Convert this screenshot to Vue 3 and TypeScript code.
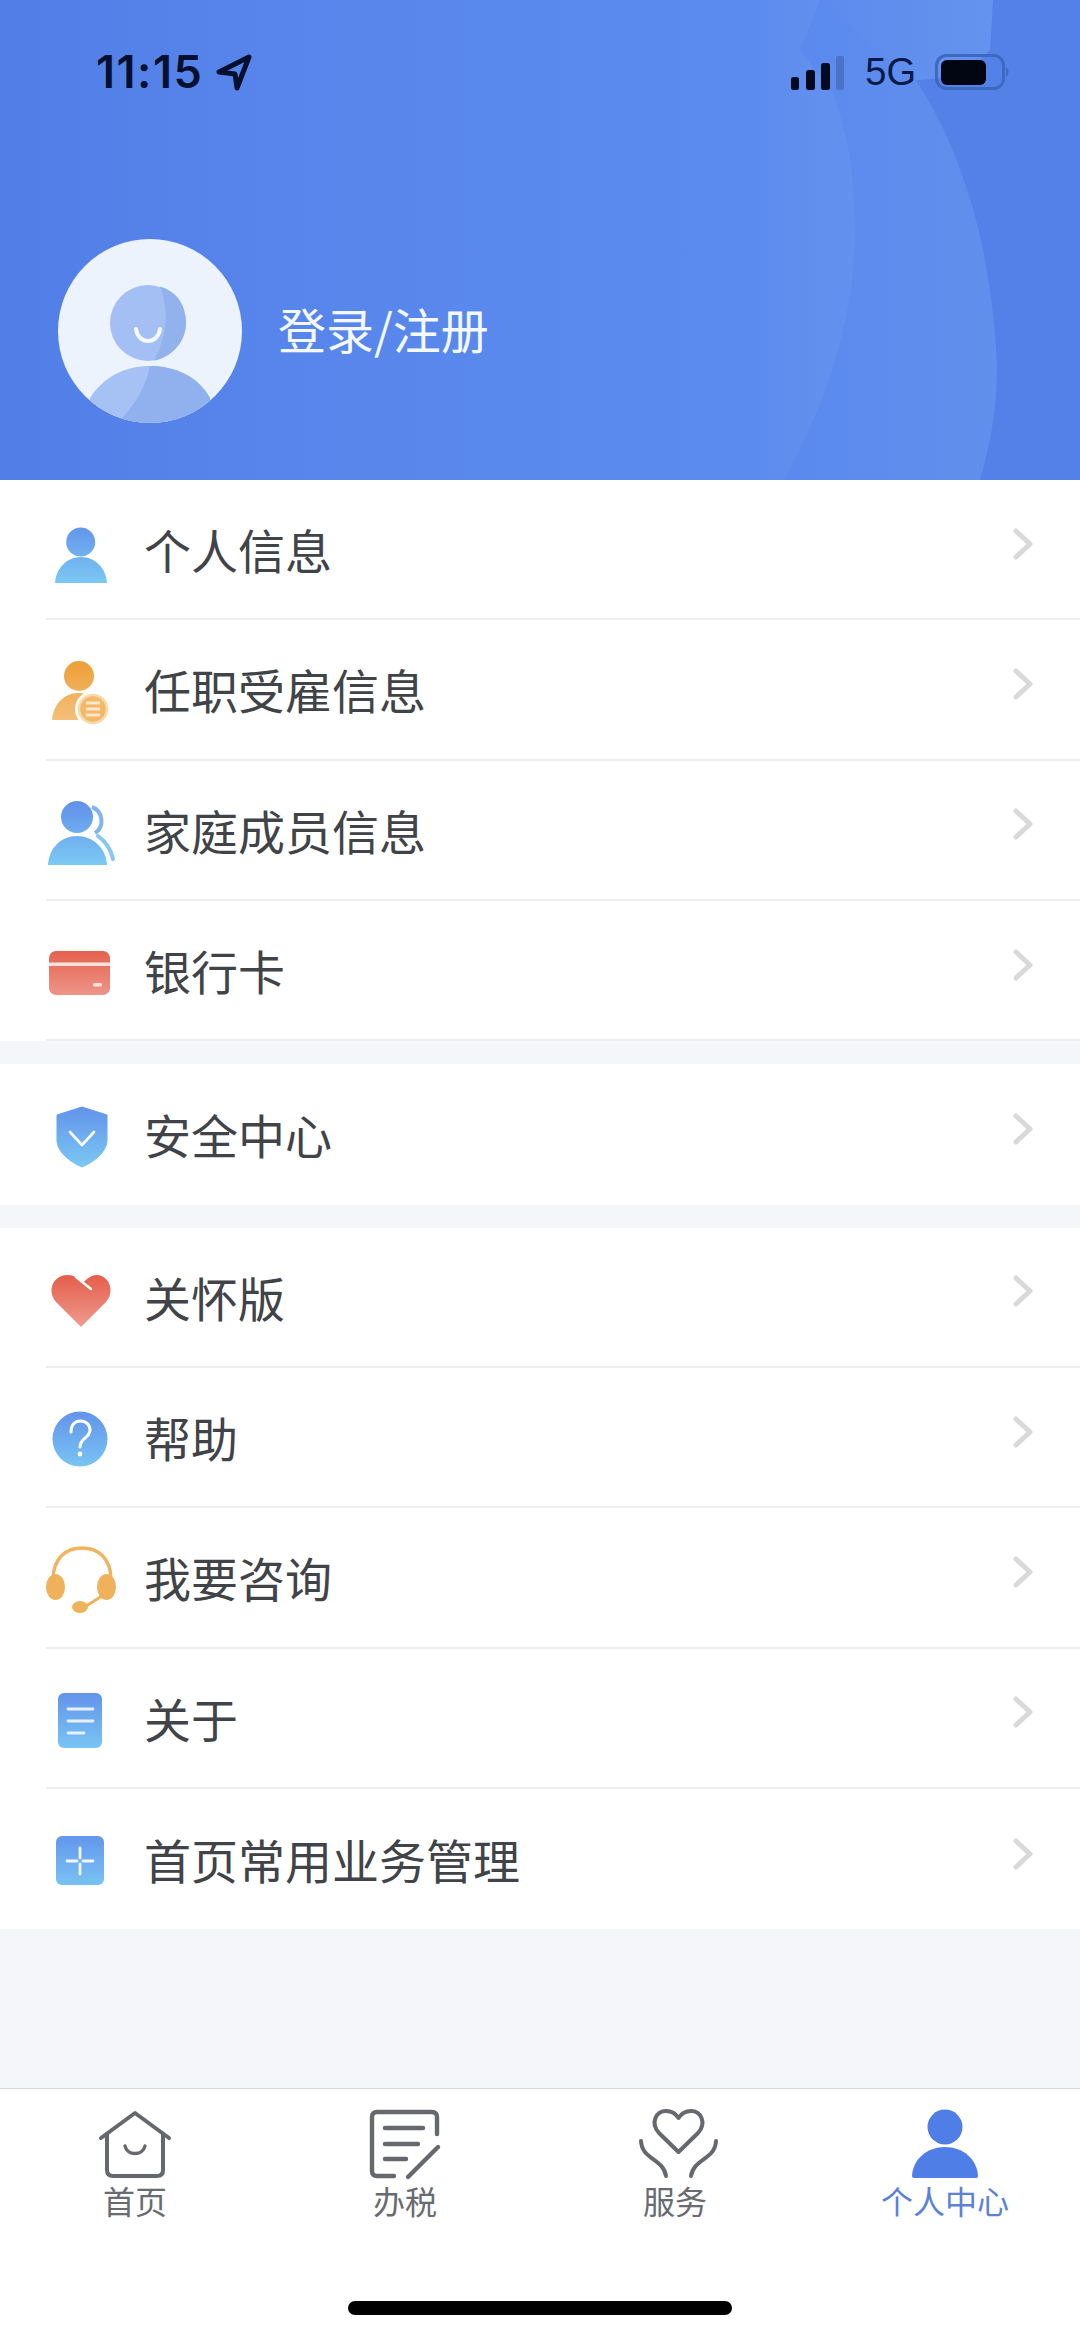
<script setup lang="ts">
interface Row { label: string; icon: string }
const sections: { rows: Row[]; lastLine: boolean }[] = [
  {
    lastLine: true,
    rows: [
      { label: '个人信息', icon: 'person' },
      { label: '任职受雇信息', icon: 'job' },
      { label: '家庭成员信息', icon: 'family' },
      { label: '银行卡', icon: 'card' },
    ],
  },
  { lastLine: false, rows: [{ label: '安全中心', icon: 'shield' }] },
  {
    lastLine: false,
    rows: [
      { label: '关怀版', icon: 'heart' },
      { label: '帮助', icon: 'help' },
      { label: '我要咨询', icon: 'headset' },
      { label: '关于', icon: 'doc' },
      { label: '首页常用业务管理', icon: 'plus' },
    ],
  },
]
const tabs = [
  { label: '首页', icon: 'home', active: false },
  { label: '办税', icon: 'tax', active: false },
  { label: '服务', icon: 'care', active: false },
  { label: '个人中心', icon: 'me', active: true },
]
</script>

<template>
  <div class="page">
    <svg class="defs" width="0" height="0" aria-hidden="true">
      <defs>
        <linearGradient id="gBlue" gradientUnits="userSpaceOnUse" x1="0" y1="12" x2="0" y2="74">
          <stop offset="0" stop-color="#6292ea" />
          <stop offset="1" stop-color="#7bc9f4" />
        </linearGradient>
        <linearGradient id="gOrange" gradientUnits="userSpaceOnUse" x1="0" y1="12" x2="0" y2="74">
          <stop offset="0" stop-color="#ee9f38" />
          <stop offset="1" stop-color="#f5c27f" />
        </linearGradient>
        <linearGradient id="gRed" gradientUnits="userSpaceOnUse" x1="0" y1="18" x2="0" y2="68">
          <stop offset="0" stop-color="#e45f4b" />
          <stop offset="1" stop-color="#ee9a8e" />
        </linearGradient>
      </defs>
    </svg>

    <header class="hero">
      <svg class="waves" viewBox="0 0 1080 480" preserveAspectRatio="none" aria-hidden="true">
        <defs>
          <linearGradient id="gHero" x1="0" y1="0" x2="1" y2="0">
            <stop offset="0" stop-color="#527fe7" />
            <stop offset="0.45" stop-color="#5a89ed" />
            <stop offset="0.7" stop-color="#5b8bee" />
            <stop offset="0.76" stop-color="#6290ee" />
            <stop offset="1" stop-color="#6592ef" />
          </linearGradient>
          <linearGradient id="gBand" gradientUnits="userSpaceOnUse" x1="800" y1="0" x2="1000" y2="0">
            <stop offset="0" stop-color="#5a8aee" />
            <stop offset="1" stop-color="#608fec" />
          </linearGradient>
          <linearGradient id="gBandTop" gradientUnits="userSpaceOnUse" x1="820" y1="0" x2="990" y2="0">
            <stop offset="0" stop-color="#6190ee" stop-opacity="0" />
            <stop offset="1" stop-color="#6492ee" stop-opacity="1" />
          </linearGradient>
        </defs>
        <rect width="1080" height="480" fill="url(#gHero)" />
        <path d="M820 0 C812 20 806 36 800 50 C815 70 826 85 833 93 C846 130 853 165 855 215 C857 270 846 335 825 390 C812 425 798 455 783 480 H1080 V0 Z" fill="url(#gBand)" />
        <path d="M820 0 H993 L990 50 C975 68 950 78 918 84 C890 60 850 25 820 0 Z" fill="url(#gBandTop)" />
        <path d="M993 0 C992 20 991 35 990 50 C970 72 945 80 916 80 C945 125 960 165 972 205 C985 250 995 310 997 367 C997 410 990 445 980 480 H1080 V0 Z" fill="#5381e8" />
      </svg>

      <div class="status">
        <span class="time">11:15</span>
        <svg class="loc" width="38" height="38" viewBox="0 0 38 38">
          <path d="M34 4 L4 19 L20 21 L22 35 Z" fill="none" stroke="#04102e" stroke-width="5" stroke-linejoin="round" />
        </svg>
        <span class="status-fill"></span>
        <svg class="signal" width="54" height="34" viewBox="0 0 54 34">
          <rect x="0" y="21" width="8" height="13" rx="2.5" fill="#020a20" />
          <rect x="15" y="14" width="9" height="20" rx="2.5" fill="#020a20" />
          <rect x="30" y="7" width="9" height="27" rx="2.5" fill="#020a20" />
          <rect x="45" y="0" width="8" height="34" rx="2" fill="#4a74c9" />
        </svg>
        <span class="net">5G</span>
        <svg class="battery" width="76" height="36" viewBox="0 0 76 36">
          <rect x="1.5" y="1.5" width="67" height="33" rx="10" fill="none" stroke="#3f69bf" stroke-width="3" />
          <rect x="6" y="6" width="45" height="25" rx="6" fill="#020512" />
          <path d="M71 13 Q76 18 71 23 Z" fill="#3f69bf" />
        </svg>
      </div>

      <div class="profile">
        <svg class="avatar" width="184" height="186" viewBox="0 0 184 186">
          <defs>
            <clipPath id="avatarClip"><circle cx="92" cy="93" r="92" /></clipPath>
          </defs>
          <circle cx="92" cy="93" r="92" fill="#edf3fd" />
          <circle cx="90" cy="85" r="38" fill="#a4bff3" />
          <path d="M102 48.5 C112 75 108 100 96 122.5 C112 120 128 104 128 85 C128 66 118 53 102 48.5 Z" fill="#92b2ed" />
          <path d="M78 91 C80 107 100 107 102 91" fill="none" stroke="#f4f8ff" stroke-width="4" stroke-linecap="round" />
          <g clip-path="url(#avatarClip)">
            <path d="M32 160 C46 138 68 128 92 128 C116 128 140 138 152 160 L152 190 L32 190 Z" fill="#a6c1f3" />
            <path d="M92 128 C116 128 140 138 152 160 L152 190 L55 190 C75 170 88 150 92 128 Z" fill="#91b1ee" />
          </g>
        </svg>
        <span class="login">登录/注册</span>
      </div>
    </header>

    <main class="content">
      <section v-for="(section, s) in sections" :key="s" class="group">
        <div
          v-for="(row, r) in section.rows"
          :key="row.label"
          class="row"
        >
          <svg class="row-icon" width="80" height="80" viewBox="0 0 80 80">
            <template v-if="row.icon === 'person'">
              <circle cx="36.7" cy="32" r="14.5" fill="url(#gBlue)" />
              <path d="M11 73 C12 58 23 47 37 47 C51 47 62 58 63 73 Z" fill="url(#gBlue)" />
            </template>
            <template v-else-if="row.icon === 'job'">
              <circle cx="35" cy="26" r="15" fill="url(#gOrange)" />
              <path d="M8 70 C9 54 21 43 34 43 C46 43 56 50 60 60 L60 70 Z" fill="url(#gOrange)" />
              <circle cx="49" cy="59" r="18" fill="#fff" />
              <circle cx="49" cy="59" r="14" fill="#f3b868" stroke="#f9d9a9" stroke-width="2.5" />
              <path d="M42 53 H56 M42 59 H56 M42 65 H56" stroke="#fbe7c8" stroke-width="3" />
            </template>
            <template v-else-if="row.icon === 'family'">
              <path d="M48 16 C59 20 61 36 51 42" fill="none" stroke="#7fb4ee" stroke-width="4" />
              <path d="M54 45 C62 51 67 58 69 68" fill="none" stroke="#85c6f2" stroke-width="4" stroke-linecap="round" />
              <circle cx="33" cy="26" r="16" fill="url(#gBlue)" />
              <path d="M4 74 C5 57 17 45 33 45 C49 45 62 57 63 74 Z" fill="url(#gBlue)" />
            </template>
            <template v-else-if="row.icon === 'card'">
              <rect x="5" y="20" width="61" height="44" rx="7" fill="url(#gRed)" />
              <rect x="5" y="31.5" width="61" height="3.5" fill="#fbe3dd" />
              <rect x="49" y="52" width="9" height="3.5" rx="1.5" fill="#fbe3dd" />
            </template>
            <template v-else-if="row.icon === 'shield'">
              <path d="M38 13 L63 21 V46 C63 58 50 68 38 73 C26 68 13 58 13 46 V21 Z" fill="url(#gBlue)" stroke="url(#gBlue)" stroke-width="1" stroke-linejoin="round" />
              <path d="M26 38 L38 51 L50 38" fill="none" stroke="#fff" stroke-width="2.6" stroke-linecap="round" stroke-linejoin="round" />
            </template>
            <template v-else-if="row.icon === 'heart'">
              <path d="M37 69 L13 45 C3 35 7 18 23 17 C30 17 35 20 39 25 C43 20 48 17 53 17 C66 18 71 34 62 44 Z" fill="url(#gRed)" />
              <path d="M32 19 L47 31" stroke="#fff" stroke-width="2.4" stroke-linecap="round" />
            </template>
            <template v-else-if="row.icon === 'help'">
              <circle cx="36" cy="41" r="27.5" fill="url(#gBlue)" />
              <path d="M27 34 C27 27 31 23 36.5 23 C42 23 46 27 46 32 C46 40 36 40 36 49" fill="none" stroke="#fff" stroke-width="3" stroke-linecap="round" />
              <circle cx="36" cy="56" r="2.4" fill="#fff" />
            </template>
            <template v-else-if="row.icon === 'headset'">
              <path d="M9 42 C9 20 22 10 38 10 C54 10 67 20 67 42" fill="none" stroke="#f0b45c" stroke-width="3.4" />
              <ellipse cx="11.5" cy="49" rx="9.5" ry="13" fill="#efb159" />
              <ellipse cx="62.5" cy="49" rx="9.5" ry="13" fill="#efb159" />
              <path d="M42 68 L58 58" stroke="#efb159" stroke-width="3" />
              <ellipse cx="36" cy="69" rx="8" ry="6" fill="#efb159" />
            </template>
            <template v-else-if="row.icon === 'doc'">
              <rect x="14" y="14" width="44" height="55" rx="6" fill="url(#gBlue)" />
              <path d="M24 30 H49 M24 42 H49 M24 54 H40" stroke="#e6f1fd" stroke-width="2.8" stroke-linecap="round" />
            </template>
            <template v-else-if="row.icon === 'plus'">
              <rect x="12" y="17" width="48" height="49" rx="6" fill="url(#gBlue)" />
              <path d="M36 29 V39 M36 45 V55 M23 42 H33 M39 42 H49" stroke="#f0f6fe" stroke-width="2.8" stroke-linecap="round" />
            </template>
          </svg>
          <div class="row-body" :class="{ lined: r < section.rows.length - 1 || section.lastLine }">
            <span class="row-label">{{ row.label }}</span>
            <svg class="chev" width="24" height="36" viewBox="0 0 24 36">
              <path d="M5 5 L19 18 L5 31" fill="none" stroke="#d9d9d9" stroke-width="5" stroke-linecap="round" stroke-linejoin="round" />
            </svg>
          </div>
        </div>
      </section>
    </main>

    <nav class="tabbar">
      <div v-for="tab in tabs" :key="tab.label" class="tab" :class="{ active: tab.active }">
        <svg class="tab-icon" width="80" height="72" viewBox="0 0 80 72">
          <g v-if="tab.icon === 'home'" fill="none" stroke="#65686e" stroke-width="4" stroke-linecap="round" stroke-linejoin="round">
            <path d="M6 30 L40 5 L74 30" />
            <path d="M12 26 V62 Q12 68 18 68 H62 Q68 68 68 62 V26" />
            <path d="M30 38 C32 48 48 48 50 38" stroke-width="3.4" />
          </g>
          <g v-else-if="tab.icon === 'tax'" fill="none" stroke="#65686e" stroke-width="4.4" stroke-linecap="round" stroke-linejoin="round">
            <path d="M72 26 V9 Q72 4 67 4 H12 Q7 4 7 9 V63 Q7 68 12 68 H29" />
            <path d="M20 20 H58 M20 36 H53 M20 51 H41" />
            <path d="M43 69 L73 39" />
          </g>
          <g v-else-if="tab.icon === 'care'" fill="none" stroke="#65686e" stroke-width="4" stroke-linecap="round" stroke-linejoin="round">
            <path d="M43.5 44 L24 25 C15 15 21 3 31 3 C37 3 41 6 43.5 10 C46 6 50 3 56 3 C66 3 72 15 63 25 Z" />
            <path d="M6 33 C7 52 28 50 31 68" />
            <path d="M81 33 C80 52 59 50 56 68" />
          </g>
          <g v-else fill="#4f7fe6">
            <circle cx="40" cy="19" r="17.5" />
            <path d="M7 68 C8 51 22 39 40 39 C58 39 72 51 73 68 Q73 70 71 70 H9 Q7 70 7 68 Z" />
          </g>
        </svg>
        <span class="tab-label">{{ tab.label }}</span>
      </div>
      <div class="home-indicator"></div>
    </nav>
  </div>
</template>

<style>
html, body { margin: 0; background: #f4f6fa; }
</style>

<style scoped>
.page {
  width: 1080px;
  height: 2337px;
  display: flex;
  flex-direction: column;
  background: #f4f6fa;
  font-family: "Noto Sans CJK SC", "Noto Sans", sans-serif;
  overflow: hidden;
}
.defs { position: absolute; }
.hero {
  position: relative;
  height: 480px;
  flex: none;
  padding: 54px 73px 0 58px;
  box-sizing: border-box;
  overflow: hidden;
}
.waves {
  position: absolute;
  inset: 0;
  width: 1080px;
  height: 480px;
}
.status {
  position: relative;
  display: flex;
  align-items: center;
  height: 36px;
  padding-left: 38px;
}
.time {
  font-family: Inter, sans-serif;
  font-weight: 600;
  font-size: 45px;
  line-height: 36px;
  letter-spacing: 1.5px;
  color: #04102e;
}
.loc { margin-left: 12px; }
.status-fill { flex: 1; }
.signal { margin-top: 2px; }
.net {
  margin-left: 20px;
  font-family: "Liberation Sans", Arial, sans-serif;
  font-size: 38px;
  line-height: 36px;
  color: #071a47;
}
.battery { margin-left: 19px; margin-right: -4px; }
.profile {
  position: relative;
  display: flex;
  align-items: center;
  gap: 36px;
  margin-top: 148px;
}
.avatar { flex: none; }
.login {
  color: #f4f8ff;
  font-size: 48px;
  line-height: 60px;
  margin-bottom: 7px;
}
.content { flex: 1; }
.group {
  background: #fff;
  margin-bottom: 23px;
}
.row {
  display: flex;
  align-items: center;
  height: 140.33px;
  padding-left: 44px;
}
.row-icon { flex: none; }
.row-body {
  flex: 1;
  align-self: stretch;
  display: flex;
  align-items: center;
  margin-left: -78px;
  padding-left: 98px;
  padding-right: 45px;
}
.row-body.lined { border-bottom: 2px solid #eeeeee; }
.row-label {
  flex: 1;
  font-size: 47px;
  line-height: 60px;
  color: #404347;
}
.chev { flex: none; margin-bottom: 11px; }
.tabbar {
  position: relative;
  flex: none;
  height: 249px;
  box-sizing: border-box;
  display: grid;
  grid-template-columns: repeat(4, 270px);
  align-items: start;
  background: #fff;
  border-top: 1.5px solid #d4d4d6;
  padding-top: 19px;
}
.tab {
  display: flex;
  flex-direction: column;
  align-items: center;
}
.tab-icon { overflow: visible; }
.tab-label {
  font-size: 32px;
  line-height: 40px;
  color: #686b71;
}
.tab.active .tab-label { color: #5b82d8; }
.home-indicator {
  position: absolute;
  left: 348px;
  bottom: 22px;
  width: 384px;
  height: 14px;
  border-radius: 7px;
  background: #000;
}
</style>
